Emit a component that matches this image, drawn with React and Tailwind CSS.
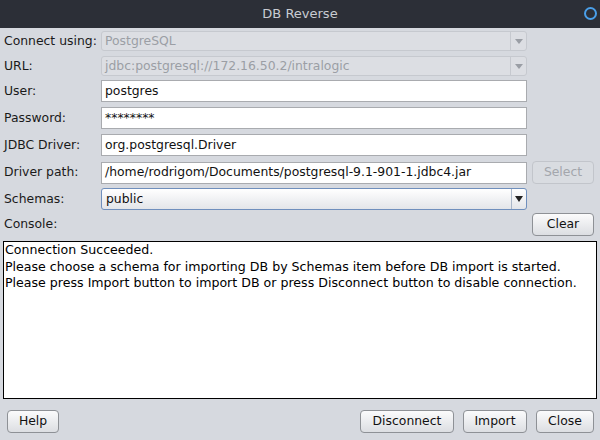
const font = { fontFamily: '"DejaVu Sans", sans-serif' }

const Label = ({ children }) => (
  <div className="w-[97px] shrink-0 whitespace-nowrap text-[12.4px] text-[#1a1a1a] leading-none">{children}</div>
)

const DisabledCombo = ({ value }) => (
  <div className="w-[426px] h-[20px] flex items-stretch rounded-[3px] border border-[#c6c9cf] bg-[#dcdee3] text-[12.4px] text-[#9b9ea5]">
    <div className="flex-1 flex items-center pl-[3px]">{value}</div>
    <div className="w-[16px] border-l border-[#c6c9cf] flex items-center justify-center">
      <svg width="8" height="5" viewBox="0 0 8 5"><path d="M0 0H8L4 5Z" fill="#9a9ea5" /></svg>
    </div>
  </div>
)

const Field = ({ value }) => (
  <div className="w-[426px] h-[22px] flex items-center border border-[#a9abaf] bg-white pl-[3px] text-[12.4px] text-[#111]">
    {value}
  </div>
)

const Btn = ({ children, w, disabled }) => (
  <div
    className={`h-[23px] ${w} flex items-center justify-center rounded-[4px] border text-[12.4px] ${
      disabled
        ? 'border-[#c2c5cb] bg-[#d9dce1] text-[#a3a6ac]'
        : 'border-[#8e9196] bg-gradient-to-b from-[#fbfbfc] to-[#dcdee2] text-[#111]'
    }`}
  >
    {children}
  </div>
)

export default function App() {
  return (
    <div className="w-[600px] h-[440px] bg-[#d6d9df] flex flex-col overflow-hidden" style={font}>
      <div className="h-[28px] bg-[#2c2f37] flex items-center justify-center relative shrink-0">
        <span className="text-[13px] text-[#c9ccd2]">DB Reverse</span>
        <div className="absolute right-[3px] top-[7px] w-[13px] h-[13px] rounded-full border-2 border-[#4a9fe9]" />
      </div>

      <div className="pl-[4px] flex flex-col">
        <div className="flex items-center mt-[3px]">
          <Label>Connect using:</Label>
          <DisabledCombo value="PostgreSQL" />
        </div>
        <div className="flex items-center mt-[5px]">
          <Label>URL:</Label>
          <DisabledCombo value="jdbc:postgresql://172.16.50.2/intralogic" />
        </div>
        <div className="flex items-center mt-[4px]">
          <Label>User:</Label>
          <Field value="postgres" />
        </div>
        <div className="flex items-center mt-[5px]">
          <Label>Password:</Label>
          <Field value="********" />
        </div>
        <div className="flex items-center mt-[5px]">
          <Label>JDBC Driver:</Label>
          <Field value="org.postgresql.Driver" />
        </div>
        <div className="flex items-center mt-[5px]">
          <Label>Driver path:</Label>
          <Field value="/home/rodrigom/Documents/postgresql-9.1-901-1.jdbc4.jar" />
          <div className="ml-[5px]">
            <Btn w="w-[62px]" disabled>Select</Btn>
          </div>
        </div>
        <div className="flex items-center mt-[4px]">
          <Label>Schemas:</Label>
          <div className="w-[426px] h-[22px] flex items-stretch rounded-[3px] border border-[#6f8fbd] bg-gradient-to-b from-[#ffffff] to-[#e3e5e9] text-[12.4px] text-[#111]">
            <div className="flex-1 flex items-center pl-[4px]">public</div>
            <div className="w-[15px] border-l border-[#a9b6c8] flex items-center justify-center">
              <svg width="8" height="6" viewBox="0 0 8 6"><path d="M0 0H8L4 6Z" fill="#222" /></svg>
            </div>
          </div>
        </div>
        <div className="flex items-center mt-[3px]">
          <div className="w-[528px] text-[12.4px] text-[#1a1a1a]">Console:</div>
          <Btn w="w-[62px]">Clear</Btn>
        </div>
      </div>

      <div className="mx-[3px] mt-[5px] h-[158px] border border-black bg-white px-[1px] text-[12.6px] leading-[16.5px] text-black">
        <div>Connection Succeeded.</div>
        <div>Please choose a schema for importing DB by Schemas item before DB import is started.</div>
        <div>Please press Import button to import DB or press Disconnect button to disable connection.</div>
      </div>

      <div className="flex items-center mt-[11px] pl-[7px] pr-[6px]">
        <Btn w="w-[52px]">Help</Btn>
        <div className="flex-1" />
        <Btn w="w-[94px]">Disconnect</Btn>
        <div className="w-[9px]" />
        <Btn w="w-[64px]">Import</Btn>
        <div className="w-[9px]" />
        <Btn w="w-[58px]">Close</Btn>
      </div>
    </div>
  )
}
